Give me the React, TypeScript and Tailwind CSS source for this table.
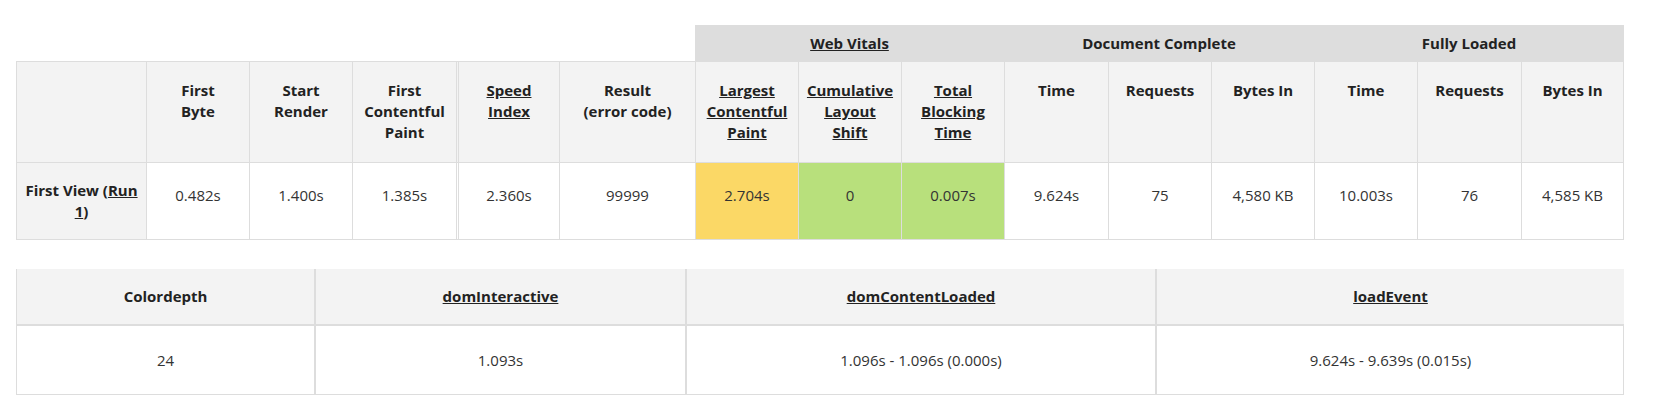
import React from "react";

const cols1 =
  "grid grid-cols-[130px_103px_103px_104px_103px_136px_103px_103px_103px_104px_103px_103px_103px_104px_103px]";

type H = { label: React.ReactNode; link?: boolean; dbl?: boolean };

const L = ({ children }: { children: React.ReactNode }) => (
  <a className="underline text-[#222] cursor-pointer">{children}</a>
);

const headers: H[] = [
  { label: "" },
  { label: <>First<br />Byte</> },
  { label: <>Start<br />Render</> },
  { label: <>First<br />Contentful<br />Paint</> },
  { label: <L>Speed<br />Index</L>, dbl: true },
  { label: <>Result<br />(error code)</> },
  { label: <L>Largest<br />Contentful<br />Paint</L> },
  { label: <L>Cumulative<br />Layout<br />Shift</L> },
  { label: <L>Total<br />Blocking<br />Time</L> },
  { label: "Time" },
  { label: "Requests" },
  { label: "Bytes In" },
  { label: "Time" },
  { label: "Requests" },
  { label: "Bytes In" },
];

const values: { v: string; bg?: string; dbl?: boolean }[] = [
  { v: "0.482s" },
  { v: "1.400s" },
  { v: "1.385s" },
  { v: "2.360s", dbl: true },
  { v: "99999" },
  { v: "2.704s", bg: "bg-[#fbd866]" },
  { v: "0", bg: "bg-[#b8e07c]" },
  { v: "0.007s", bg: "bg-[#b8e07c]" },
  { v: "9.624s" },
  { v: "75" },
  { v: "4,580 KB" },
  { v: "10.003s" },
  { v: "76" },
  { v: "4,585 KB" },
];

export default function App() {
  return (
    <div
      className="w-[1656px] h-[418px] bg-white px-4 pt-[25px] text-[15px] leading-[21px] text-[#222]"
      style={{ fontFamily: "'Open Sans', 'Liberation Sans', sans-serif" }}
    >
      {/* Table 1 */}
      <div className={cols1 + " w-[1608px]"}>
        {/* group row */}
        <div className="col-span-6 h-[36px]" />
        <div className="col-span-3 h-[36px] bg-[#dddddd] flex items-center justify-center font-bold">
          <L>Web Vitals</L>
        </div>
        <div className="col-span-3 h-[36px] bg-[#dddddd] flex items-center justify-center font-bold">
          Document Complete
        </div>
        <div className="col-span-3 h-[36px] bg-[#dddddd] flex items-center justify-center font-bold">
          Fully Loaded
        </div>

        {/* header row */}
        {headers.map((h, i) => (
          <div
            key={i}
            className={
              "h-[101px] bg-[#f3f3f3] border-t border-[#dddddd] pt-[18px] text-center font-bold " +
              (h.dbl ? "border-l-[3px] border-l-[#dddddd] border-double " : "border-l ") +
              (i === headers.length - 1 ? "border-r" : "")
            }
          >
            {h.label}
          </div>
        ))}

        {/* data row */}
        <div className="h-[78px] bg-[#f3f3f3] border-t border-l border-b border-[#dddddd] flex items-center justify-center text-center font-bold px-2">
          <span>
            First View (<L>Run</L>
            <br />
            <L>1</L>)
          </span>
        </div>
        {values.map((c, i) => (
          <div
            key={i}
            className={
              "h-[78px] border-t border-b border-[#dddddd] pt-[22px] text-center text-[#333] " +
              (c.bg ? c.bg + " " : "") +
              (c.dbl ? "border-l-[3px] border-l-[#dddddd] border-double " : "border-l ") +
              (i === values.length - 1 ? "border-r" : "")
            }
          >
            {c.v}
          </div>
        ))}
      </div>

      {/* Table 2 */}
      <div className="mt-[29px] w-[1608px] grid grid-cols-[298px_371px_470px_469px] border-r border-b border-[#dddddd]">
        <div className="h-[57px] bg-[#f3f3f3] border-l border-b-2 border-[#dddddd] flex items-center justify-center font-bold">
          Colordepth
        </div>
        <div className="h-[57px] bg-[#f3f3f3] border-l-2 border-b-2 border-[#dddddd] flex items-center justify-center font-bold">
          <L>domInteractive</L>
        </div>
        <div className="h-[57px] bg-[#f3f3f3] border-l-2 border-b-2 border-[#dddddd] flex items-center justify-center font-bold">
          <L>domContentLoaded</L>
        </div>
        <div className="h-[57px] bg-[#f3f3f3] border-l-2 border-b-2 border-[#dddddd] flex items-center justify-center font-bold">
          <L>loadEvent</L>
        </div>

        <div className="h-[68px] border-l border-[#dddddd] flex items-center justify-center text-[#333]">
          24
        </div>
        <div className="h-[68px] border-l-2 border-[#dddddd] flex items-center justify-center text-[#333]">
          1.093s
        </div>
        <div className="h-[68px] border-l-2 border-[#dddddd] flex items-center justify-center text-[#333]">
          1.096s - 1.096s (0.000s)
        </div>
        <div className="h-[68px] border-l-2 border-[#dddddd] flex items-center justify-center text-[#333]">
          9.624s - 9.639s (0.015s)
        </div>
      </div>
    </div>
  );
}
